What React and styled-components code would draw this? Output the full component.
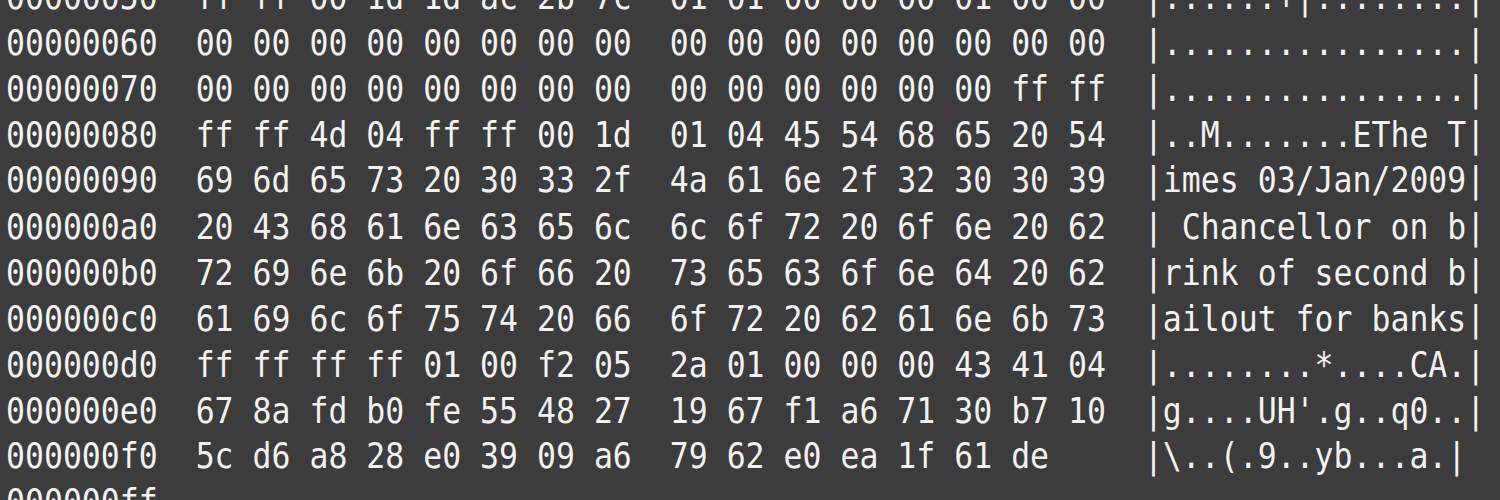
import React from "react";
import styled, { createGlobalStyle } from "styled-components";

const GlobalStyle = createGlobalStyle`
  html, body {
    margin: 0;
    padding: 0;
    background: #3c3c3c;
  }
`;

const Terminal = styled.div`
  width: 1500px;
  height: 500px;
  overflow: hidden;
  background-color: #3c3c3c;
`;

// the view is scrolled a bit, so the first row is cut at the top
const Dump = styled.pre`
  margin: -26.5px 0 0 0;
  padding: 0 0 0 6px;
  font-family: "DejaVu Sans Mono", "Liberation Mono", monospace;
  font-size: 31.5px;
  line-height: 40.85px;
  color: #f2f2f2;
  transform: scaleY(1.126);
  transform-origin: top left;
  white-space: pre;
`;

const Line = styled.div`
  height: 40.85px;
`;

const Offset = styled.span`
  color: #f2f2f2;
`;

const rows = [
  ["00000050", "ff ff 00 1d 1d ac 2b 7c  01 01 00 00 00 01 00 00", "|......+|........|"],
  ["00000060", "00 00 00 00 00 00 00 00  00 00 00 00 00 00 00 00", "|................|"],
  ["00000070", "00 00 00 00 00 00 00 00  00 00 00 00 00 00 ff ff", "|................|"],
  ["00000080", "ff ff 4d 04 ff ff 00 1d  01 04 45 54 68 65 20 54", "|..M.......EThe T|"],
  ["00000090", "69 6d 65 73 20 30 33 2f  4a 61 6e 2f 32 30 30 39", "|imes 03/Jan/2009|"],
  ["000000a0", "20 43 68 61 6e 63 65 6c  6c 6f 72 20 6f 6e 20 62", "| Chancellor on b|"],
  ["000000b0", "72 69 6e 6b 20 6f 66 20  73 65 63 6f 6e 64 20 62", "|rink of second b|"],
  ["000000c0", "61 69 6c 6f 75 74 20 66  6f 72 20 62 61 6e 6b 73", "|ailout for banks|"],
  ["000000d0", "ff ff ff ff 01 00 f2 05  2a 01 00 00 00 43 41 04", "|........*....CA.|"],
  ["000000e0", "67 8a fd b0 fe 55 48 27  19 67 f1 a6 71 30 b7 10", "|g....UH'.g..q0..|"],
  ["000000f0", "5c d6 a8 28 e0 39 09 a6  79 62 e0 ea 1f 61 de   ", "|\\..(.9..yb...a.|"],
];

const App = () => {
  return (
    <Terminal>
      <GlobalStyle />
      <Dump>
        {rows.map(([off, hex, ascii]) => (
          <Line key={off}>
            <Offset>{off}</Offset>
            {"  " + hex + "  " + ascii}
          </Line>
        ))}
        <Line>
          <Offset>000000ff</Offset>
        </Line>
      </Dump>
    </Terminal>
  );
};

export default App;
